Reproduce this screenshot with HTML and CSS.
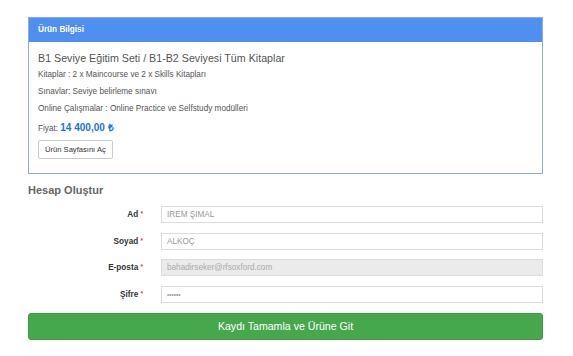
FILE: index.html
```html
<!doctype html>
<html lang="tr">
<head>
	<meta charset="UTF-8">
	<title>Hesap Oluştur</title>
	<link rel="stylesheet" href="styles.css">
</head>
<body>
	<div class="panel">
		<div class="panel-heading">Ürün Bilgisi</div>
		<div class="panel-body">
			<h3 class="product-title">B1 Seviye Eğitim Seti / B1-B2 Seviyesi Tüm Kitaplar</h3>
			<p class="info">Kitaplar : 2 x Maincourse ve 2 x Skills Kitapları</p>
			<p class="info">Sınavlar: Seviye belirleme sınavı</p>
			<p class="info">Online Çalışmalar : Online Practice ve Selfstudy modülleri</p>
			<p class="price">Fiyat: <b>14 400,00 ₺</b></p>
			<button class="btn-small" type="button">Ürün Sayfasını Aç</button>
		</div>
	</div>

	<h2 class="form-title">Hesap Oluştur</h2>
	<form class="form">
		<label class="form-label" for="ad">Ad <span class="req">*</span></label>
		<input class="form-input" id="ad" type="text" value="İREM ŞİMAL">

		<label class="form-label" for="soyad">Soyad <span class="req">*</span></label>
		<input class="form-input" id="soyad" type="text" value="ALKOÇ">

		<label class="form-label" for="eposta">E-posta <span class="req">*</span></label>
		<input class="form-input" id="eposta" type="text" value="bahadirseker@rfsoxford.com" disabled>

		<label class="form-label" for="sifre">Şifre <span class="req">*</span></label>
		<input class="form-input form-pass" id="sifre" type="password" value="123456">

		<button class="btn-submit" type="button">Kaydı Tamamla ve Ürüne Git</button>
	</form>
</body>
</html>
```

FILE: styles.css
```css
*{
	margin: 0;
	padding: 0;
	box-sizing: border-box;
}
body{
	padding: 17px 30px 0 28px;
	font-family: "Liberation Sans", Arial, sans-serif;
	font-size: 8.2px;
	color: #555;
	background: #fff;
}
.panel{
	border: 1px solid #86adef;
}
.panel-heading{
	height: 24px;
	line-height: 24px;
	padding: 0 9px;
	background: #4f8ff0;
	color: #fff;
	font-weight: bold;
	font-size: 8.2px;
}
.panel-body{
	padding: 8px 9px 14px;
}
.product-title{
	font-size: 10.7px;
	font-weight: normal;
	line-height: 16px;
	color: #555;
}
.info{
	line-height: 17px;
}
.price{
	line-height: 19px;
	margin-top: 1px;
}
.price b{
	color: #1a74e6;
	font-size: 10px;
}
.btn-small{
	display: block;
	margin-top: 2px;
	height: 19px;
	padding: 0 6px;
	border: 1px solid #ccc;
	border-radius: 2px;
	background: #fff;
	color: #333;
	font-family: inherit;
	font-size: 7.6px;
}
.form-title{
	margin-top: 8px;
	font-size: 11px;
	line-height: 16px;
	color: #666;
}
.form{
	margin-top: 8px;
	display: grid;
	grid-template-columns: 115px 1fr;
	column-gap: 18px;
	row-gap: 9.5px;
	align-items: center;
}
.form-label{
	text-align: right;
	font-weight: bold;
	color: #333;
}
.req{
	color: #e0453f;
	font-size: 6.5px;
	vertical-align: 1px;
}
.form-input{
	height: 17px;
	padding: 0 5px;
	border: 1px solid #dcdcdc;
	background: #fff;
	color: #999;
	font-family: inherit;
	font-size: 8.2px;
	outline: none;
}
.form-input:disabled{
	background: #ebebeb;
	color: #aaa;
}
.form-pass{
	font-size: 6.4px;
}
.btn-submit{
	grid-column: 1 / 3;
	margin-top: 0.5px;
	height: 27px;
	border: 1px solid #3d9a42;
	border-radius: 3px;
	background: #47a74c;
	color: #fff;
	font-family: inherit;
	font-size: 10.6px;
}
```
